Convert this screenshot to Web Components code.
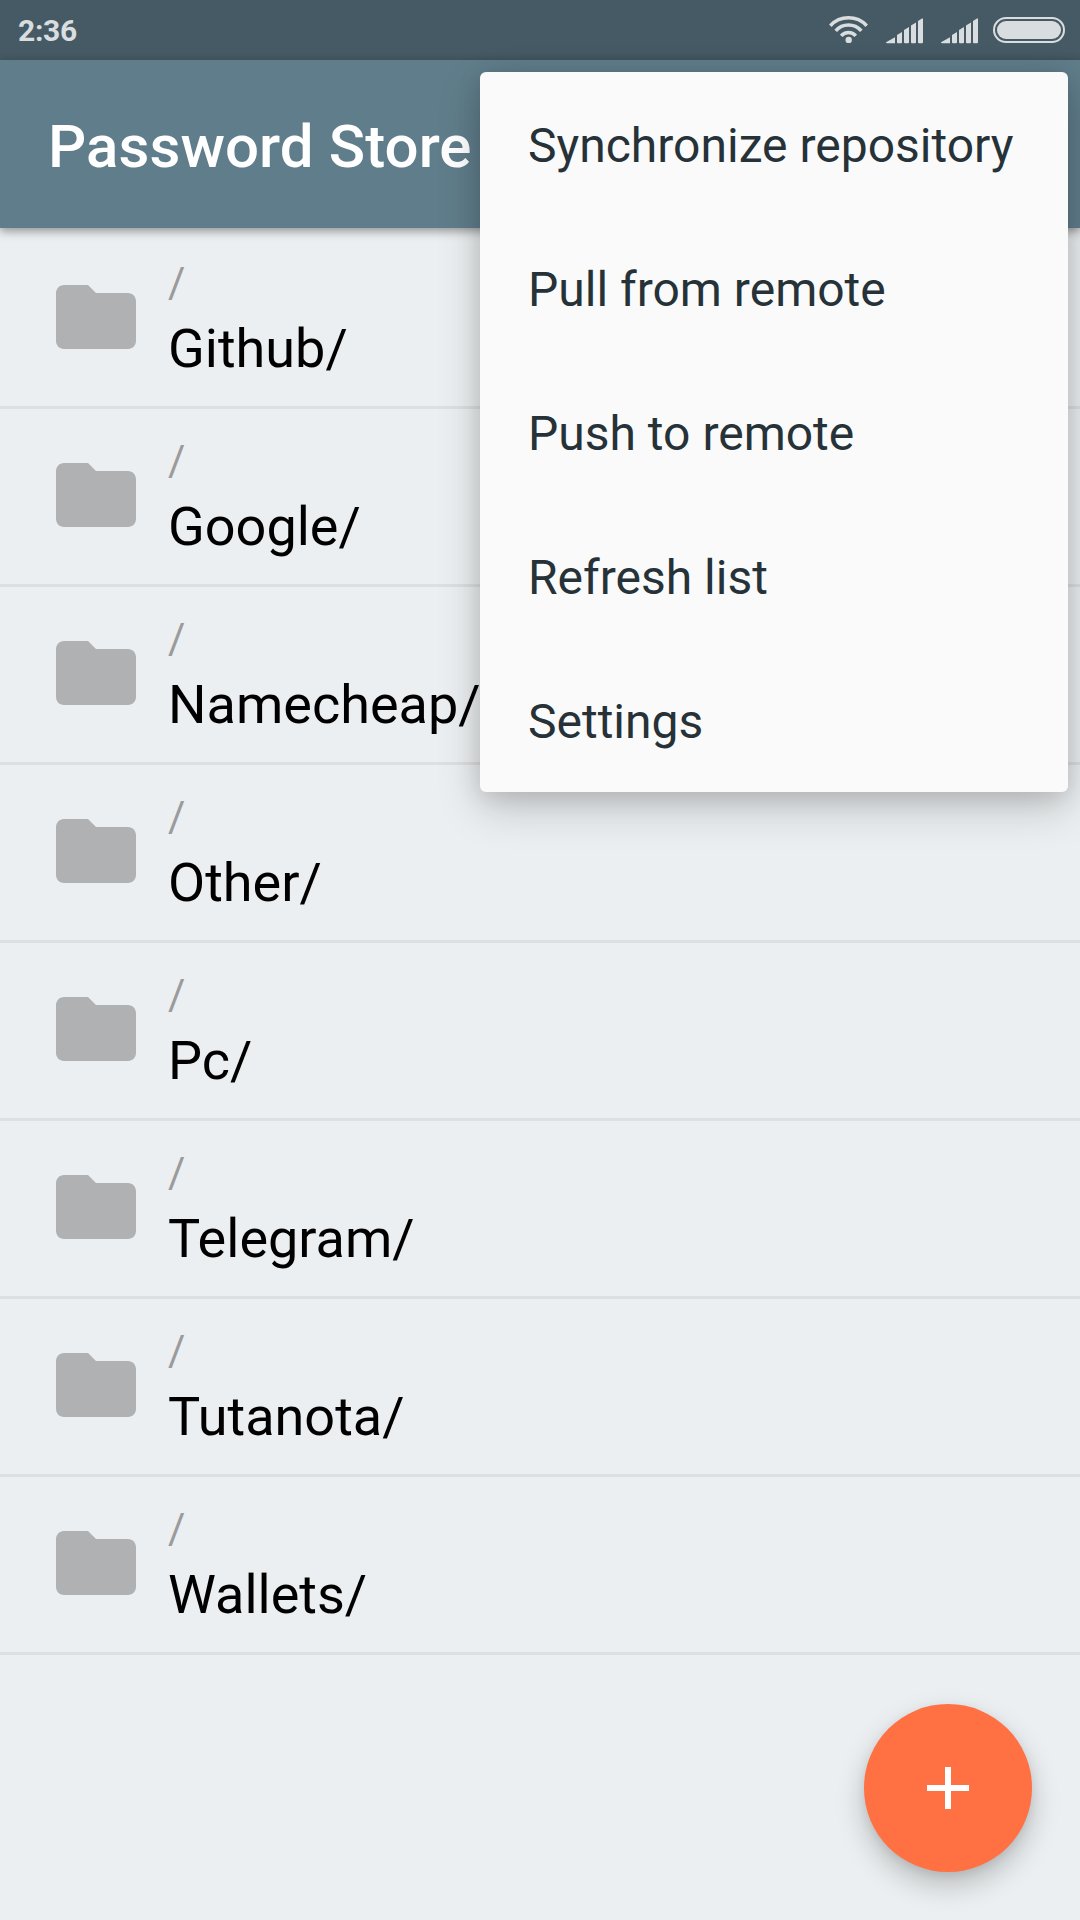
<!DOCTYPE html>
<html lang="en">
<head>
<meta charset="utf-8">
<title>Password Store</title>
<style>
html,body{margin:0;padding:0;background:#eceff1}
body{width:1080px;height:1920px;overflow:hidden;font-family:Roboto,sans-serif}
</style>
</head>
<body>
<password-app></password-app>
<script>
function define(name, html){
  const tpl=document.createElement('template');
  tpl.innerHTML=html;
  customElements.define(name, class extends HTMLElement{
    constructor(){
      super();
      this.attachShadow({mode:'open'}).appendChild(tpl.content.cloneNode(true));
    }
  });
}

define('wifi-icon', `
<style>:host{display:block;width:40px;height:28px}svg{display:block}</style>
<svg width="40" height="28" viewBox="0 0 40 28" fill="none" stroke="#dadde0" stroke-width="3.5">
<path d="M1.3 9.7A25 25 0 0 1 37.7 9.7"/>
<path d="M6.7 14.8A17 17 0 0 1 32.3 14.8"/>
<path d="M12.2 19.8A9.6 9.6 0 0 1 26.8 19.8"/>
<circle cx="19.7" cy="23.9" r="3.2" fill="#dadde0" stroke="none"/>
</svg>`);

define('signal-icon', `
<style>:host{display:block;width:37px;height:26px}svg{display:block}</style>
<svg width="37" height="26" viewBox="0 0 37 26" fill="#dadde0">
<path d="M0 24.2L9 19.3V25.2H1Q0 25.2 0 24.2Z"/>
<path d="M11 17L16 14V24.2Q16 25.2 15 25.2H12Q11 25.2 11 24.2Z"/>
<path d="M18 12L23 9V24.2Q23 25.2 22 25.2H19Q18 25.2 18 24.2Z"/>
<path d="M25 7.5L30 4.6V24.2Q30 25.2 29 25.2H26Q25 25.2 25 24.2Z"/>
<path d="M32 3L36 .4H37V24.2Q37 25.2 36 25.2H33Q32 25.2 32 24.2Z"/>
</svg>`);

define('battery-icon', `
<style>
:host{display:block;box-sizing:border-box;width:72px;height:26px;border:2px solid #dadde0;border-radius:13px;padding:2px}
i{display:block;height:18px;border-radius:9px;background:#dadde0}
</style><i></i>`);

define('status-bar', `
<style>
:host{display:flex;align-items:center;justify-content:space-between;box-sizing:border-box;height:60px;padding:0 15px 0 18px;background:#455a64;color:#dadde0}
time{font-size:30px;line-height:36px;font-weight:700;letter-spacing:-.3px;margin-top:2px}
div{display:flex;align-items:center}
signal-icon{margin:1px 18px 0 0}
wifi-icon{margin-right:17px}
.last{margin-right:15px}
</style>
<time>2:36</time>
<div><wifi-icon></wifi-icon><signal-icon></signal-icon><signal-icon class="last"></signal-icon><battery-icon></battery-icon></div>`);

define('app-bar', `
<style>
:host{display:flex;align-items:center;box-sizing:border-box;height:168px;padding:0 48px;background:#607d8b;color:#fff;position:relative;box-shadow:0 3px 8px rgba(0,0,0,.3),0 4px 12px rgba(0,0,0,.1)}
h1{margin:5px 0 0;font-size:60px;line-height:70px;font-weight:500;letter-spacing:.08px;white-space:nowrap}
</style><h1><slot></slot></h1>`);

define('folder-row', `
<style>
:host{display:flex;align-items:flex-start;box-sizing:border-box;height:178px;border-bottom:3px solid #dedfe0;padding:0 24px 0 48px;gap:24px}
svg{display:block;flex:none;margin-top:38px}
.t{display:flex;flex-direction:column;padding-top:24px;white-space:nowrap}
.p{font-size:42px;line-height:56px;color:#9b9b9b}
.n{font-size:54px;line-height:72px;margin-top:2px;color:#000}
</style>
<svg width="96" height="96" viewBox="0 0 24 24" fill="#b0b1b3"><path d="M10 4H4C2.9 4 2 4.9 2 6v12c0 1.1.9 2 2 2h16c1.1 0 2-.9 2-2V8c0-1.1-.9-2-2-2h-8z"/></svg>
<div class="t"><span class="p">/</span><span class="n"><slot></slot></span></div>`);

define('menu-item', `
<style>:host{display:flex;align-items:center;box-sizing:border-box;height:144px;padding:4px 48px 0;font-size:48px;line-height:56px;color:#263238;white-space:nowrap}</style>
<span><slot></slot></span>`);

define('overflow-menu', `
<style>
:host{display:block;position:absolute;left:480px;top:72px;width:588px;height:720px;border-radius:6px;background:#fafafa;box-shadow:0 16px 44px rgba(0,0,0,.19),0 4px 24px rgba(0,0,0,.12)}
</style><slot></slot>`);

define('add-button', `
<style>
:host{display:flex;align-items:center;justify-content:center;position:absolute;left:864px;top:1704px;width:168px;height:168px;border-radius:50%;background:#ff7043;box-shadow:0 13px 28px rgba(0,0,0,.22),0 3px 10px rgba(0,0,0,.07)}
</style>
<svg width="42" height="42" viewBox="0 0 42 42" fill="#fff"><path d="M18 0h6v18h18v6H24v18h-6V24H0v-6h18z"/></svg>`);

define('password-app', `
<style>
:host{display:block;position:relative;width:1080px;height:1920px;overflow:hidden;background:#eceff1}
main{display:flex;flex-direction:column;padding-top:3px}
</style>
<status-bar></status-bar>
<app-bar>Password Store</app-bar>
<main>
<folder-row>Github/</folder-row>
<folder-row>Google/</folder-row>
<folder-row>Namecheap/</folder-row>
<folder-row>Other/</folder-row>
<folder-row>Pc/</folder-row>
<folder-row>Telegram/</folder-row>
<folder-row>Tutanota/</folder-row>
<folder-row>Wallets/</folder-row>
</main>
<overflow-menu>
<menu-item>Synchronize repository</menu-item>
<menu-item>Pull from remote</menu-item>
<menu-item>Push to remote</menu-item>
<menu-item>Refresh list</menu-item>
<menu-item>Settings</menu-item>
</overflow-menu>
<add-button></add-button>`);
</script>
</body>
</html>
